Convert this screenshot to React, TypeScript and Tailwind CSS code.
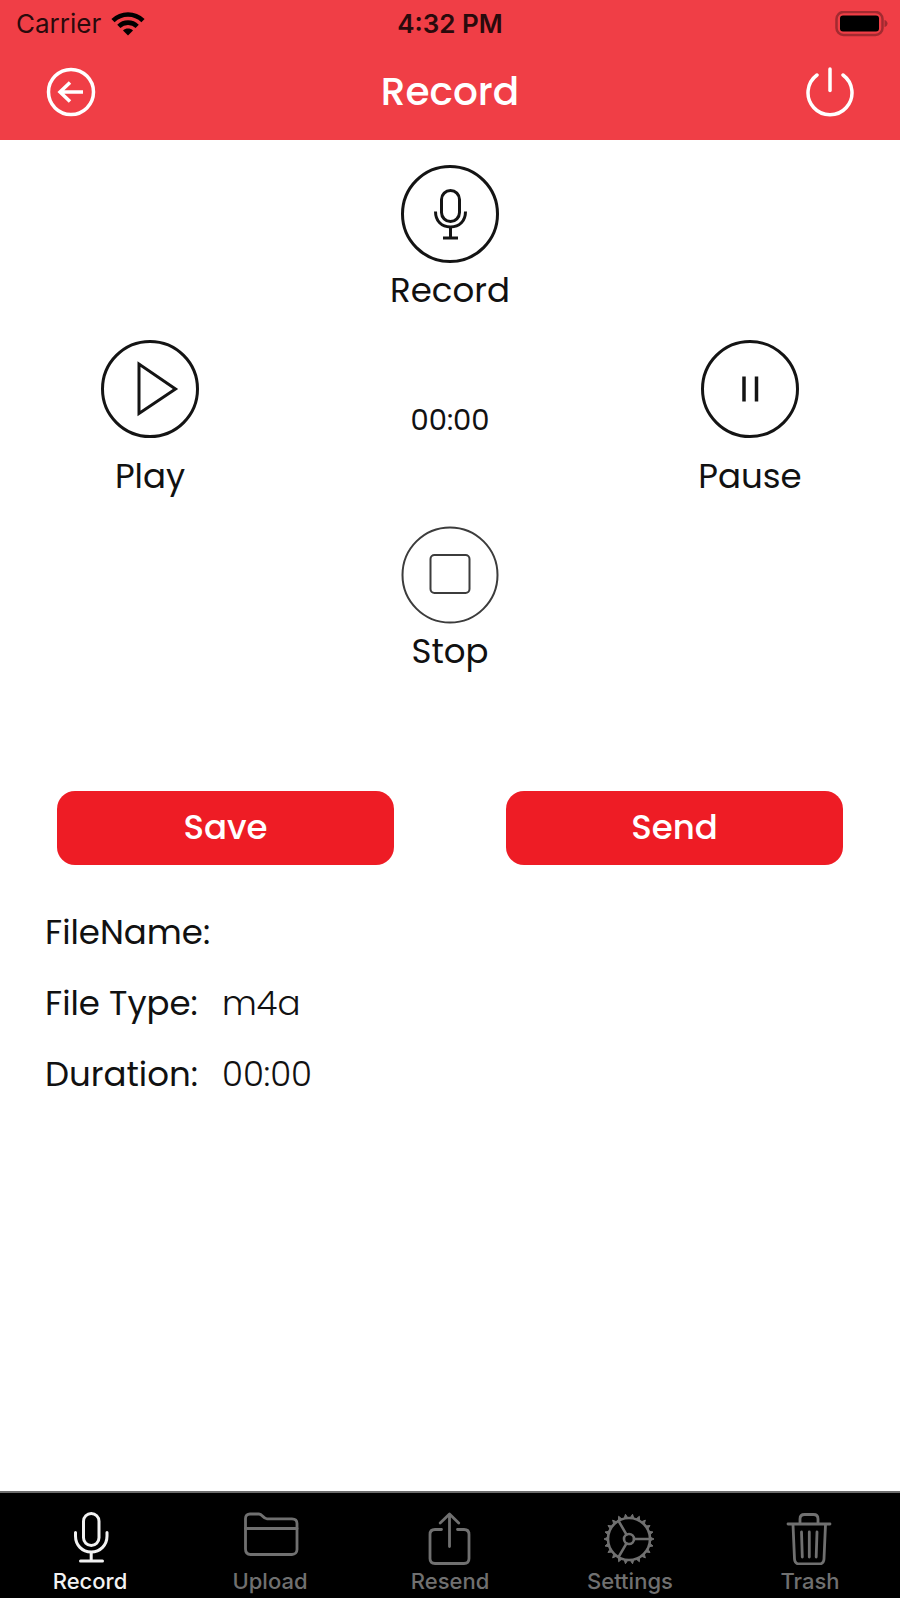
import { useState } from "react";
import type { ReactNode } from "react";

interface ControlButtonProps {
  label: string;
  thin?: boolean;
  spaced?: boolean;
  children: ReactNode;
}

// Round transport control with its caption underneath
function ControlButton({ label, thin = false, spaced = false, children }: ControlButtonProps) {
  return (
    <button
      type="button"
      className={`flex flex-col items-center justify-self-center ${spaced ? "gap-[18px]" : "gap-[7px]"}`}
    >
      <svg
        className={`h-[98px] w-[98px] ${thin ? "text-[#3c3c3c]" : "text-[#141414]"}`}
        viewBox="0 0 98 98"
        fill="none"
        stroke="currentColor"
        strokeWidth={thin ? 2 : 3}
      >
        <circle cx="49" cy="49" r="47.500" />
        {children}
      </svg>
      <span className="text-[34px] leading-10">{label}</span>
    </button>
  );
}

function WifiIcon() {
  return (
    <svg className="h-6 w-[34px]" viewBox="0 0 34 24" fill="none" stroke="#000" strokeWidth="4.6">
      <path d="M2 8.600C10.500 .4 23.500 .4 32 8.600" />
      <path d="M7.800 14.300C13 9.400 21 9.400 26.200 14.300" />
      <path d="M17 23.500L12 18.400C14.800 15.900 19.200 15.900 22 18.400Z" fill="#000" stroke="none" />
    </svg>
  );
}

function BatteryIcon() {
  return (
    <svg className="h-[26px] w-[54px]" viewBox="0 0 54 26" fill="none">
      <rect x="2.500" y="1" width="46" height="23" rx="7" stroke="#a32a30" strokeWidth="2.500" />
      <rect x="6" y="4.500" width="39" height="16" rx="3" fill="#000" />
      <path d="M50.500 9C54.500 10 54.500 15 50.500 16Z" fill="#a32a30" />
    </svg>
  );
}

const tabIconProps = {
  className: "h-[54px] w-[60px]",
  viewBox: "0 0 60 54",
  fill: "none",
  stroke: "currentColor",
  strokeWidth: 2.8,
  strokeLinecap: "round",
  strokeLinejoin: "round",
} as const;

function MicTabIcon() {
  return (
    <svg {...tabIconProps} strokeWidth={3}>
      <rect x="23.500" y="2.500" width="15.500" height="32" rx="7.750" />
      <path d="M15.500 21.500V25C15.500 34 22 41 31.200 41S47 34 47 25V21.500" />
      <path d="M31.200 41.500v8M20.500 50h22" />
    </svg>
  );
}

function FolderIcon() {
  return (
    <svg {...tabIconProps}>
      <path d="M5.500 38V7.500C5.500 4.500 7.300 3 10 3h9C22.500 3 23 7.800 27 7.800h25c3 0 5 1.700 5 4.700V38.500c0 3-2 5-5 5H10.500c-3 0-5-2-5-5.500Z" />
      <path d="M5.500 17.500h51.500" />
    </svg>
  );
}

function ShareIcon() {
  return (
    <svg {...tabIconProps}>
      <path d="M21.500 18.500H15c-3.500 0-5 2-5 5V47.500c0 3.500 1.500 5 5 5H44c3.500 0 5-1.500 5-5V23.500c0-3-1.500-5-5-5H37.500" />
      <path d="M29.500 35.500V3.500M20.200 12l9.300-9L38.700 12" />
    </svg>
  );
}

const TEETH = 22;

// Small triangular teeth standing on the rim of the gear
function gearTeeth() {
  const point = (radius: number, angle: number) =>
    `${(29 + radius * Math.cos(angle)).toFixed(2)} ${(28 + radius * Math.sin(angle)).toFixed(2)}`;
  return Array.from({ length: TEETH }, (_, i) => {
    const angle = (i * 2 * Math.PI) / TEETH;
    return `M${point(21.5, angle - 0.08)}L${point(25, angle)}L${point(21.5, angle + 0.08)}Z`;
  }).join("");
}

function GearIcon() {
  return (
    <svg {...tabIconProps} strokeWidth={2.6}>
      <circle cx="29" cy="28" r="21" />
      <circle cx="29" cy="28" r="5" />
      <path d="M34 28H50M26.500 23.700L18.500 9.800M26.500 32.300L18.500 46.200" />
      <path d={gearTeeth()} fill="currentColor" strokeWidth={1} />
    </svg>
  );
}

function TrashIcon() {
  return (
    <svg {...tabIconProps}>
      <path d="M8 13h42" />
      <path d="M20 12.500V8c0-3 1.500-4.500 4.500-4.500h9C36.500 3.500 38 5 38 8v4.500" />
      <path d="M13 13.500L14.500 48c.2 3.500 1.800 5 5 5H39c3.200 0 4.800-1.500 5-5L45.500 13.500" />
      <path d="M21.500 21l.8 25M29.300 21v25M37 21l-.8 25" />
    </svg>
  );
}

const tabs = [
  { name: "Record", icon: <MicTabIcon /> },
  { name: "Upload", icon: <FolderIcon /> },
  { name: "Resend", icon: <ShareIcon /> },
  { name: "Settings", icon: <GearIcon /> },
  { name: "Trash", icon: <TrashIcon /> },
];

const fileInfo = [
  { label: "FileName:", value: "" },
  { label: "File Type:", value: "m4a" },
  { label: "Duration:", value: "00:00" },
];

export default function App() {
  const [activeTab, setActiveTab] = useState("Record");

  return (
    <div className="flex min-h-screen flex-col bg-white font-['Poppins','Inter',sans-serif] text-[#111111]">
      <header className="bg-[#f03e46]">
        <div className="grid h-11 grid-cols-3 items-center px-4 pt-1 font-['Inter',sans-serif] text-[26px] leading-8 text-[#2a0a0c]">
          <div className="flex items-center gap-2.5">
            <span>Carrier</span>
            <WifiIcon />
          </div>
          <span className="text-center font-semibold">4:32 PM</span>
          <div className="-mr-1 flex justify-end">
            <BatteryIcon />
          </div>
        </div>
        <div className="flex h-24 items-center justify-between px-[46px]">
          <button type="button" aria-label="Back">
            <svg className="h-[50px] w-[50px]" viewBox="0 0 50 50" fill="none" stroke="#fff" strokeWidth="3.500">
              <circle cx="25" cy="25" r="22.500" />
              <path d="M37 25H14M24 15.500L14 25l10 9.500" />
            </svg>
          </button>
          <h1 className="text-[39px] leading-12 font-medium text-white">Record</h1>
          <button type="button" aria-label="Log out">
            <svg
              className="h-[50px] w-[50px]"
              viewBox="0 0 50 50"
              fill="none"
              stroke="#fff"
              strokeWidth="3.500"
              strokeLinecap="round"
            >
              <path d="M13 8A22 22 0 1 0 39 8" />
              <path d="M26 2V23.500" />
            </svg>
          </button>
        </div>
      </header>

      <main className="flex-1 pt-[25px]">
        <div className="grid">
          <ControlButton label="Record">
            <rect x="40.500" y="25.500" width="18" height="31" rx="9" />
            <path d="M34.500 46.500c0 9.500 6 15.500 15 15.500S64.500 56 64.500 46.500" />
            <path d="M49.500 62.500v10M42 73h15" />
          </ControlButton>
        </div>
        <div className="mt-[30px] grid grid-cols-3">
          <ControlButton label="Play" spaced>
            <path d="M38 24V73.500L74.500 49Z" />
          </ControlButton>
          <time className="self-center justify-self-center pt-1 text-[29px] leading-10">00:00</time>
          <ControlButton label="Pause" spaced>
            <path d="M43 36.500V61.500M55.500 36.500V61.500" strokeWidth="3.500" />
          </ControlButton>
        </div>
        <div className="mt-[30px] grid">
          <ControlButton label="Stop" thin>
            <rect x="29.500" y="29" width="39" height="38" rx="4" />
          </ControlButton>
        </div>

        <div className="mt-30 grid grid-cols-2 gap-28 px-[57px]">
          <button type="button" className="h-[74px] rounded-[18px] bg-[#ee1c25] pb-0.5 text-[34px] font-medium text-white">
            Save
          </button>
          <button type="button" className="h-[74px] rounded-[18px] bg-[#ee1c25] pb-0.5 text-[34px] font-medium text-white">
            Send
          </button>
        </div>

        <dl className="mt-8 px-[45px] text-[34px] leading-[71px]">
          {fileInfo.map((item) => (
            <div key={item.label} className="flex gap-6">
              <dt>{item.label}</dt>
              <dd className="font-light">{item.value}</dd>
            </div>
          ))}
        </dl>
      </main>

      <nav className="grid h-[107px] grid-cols-5 border-t-2 border-[#6e6e6e] bg-black font-['Inter',sans-serif]">
        {tabs.map((tab) => (
          <button
            key={tab.name}
            type="button"
            onClick={() => setActiveTab(tab.name)}
            className={`flex flex-col items-center gap-0.5 pt-[18px] text-[22px] leading-7 font-medium ${
              activeTab === tab.name ? "text-[#f2f2f2]" : "text-[#707070]"
            }`}
          >
            {tab.icon}
            <span>{tab.name}</span>
          </button>
        ))}
      </nav>
    </div>
  );
}
